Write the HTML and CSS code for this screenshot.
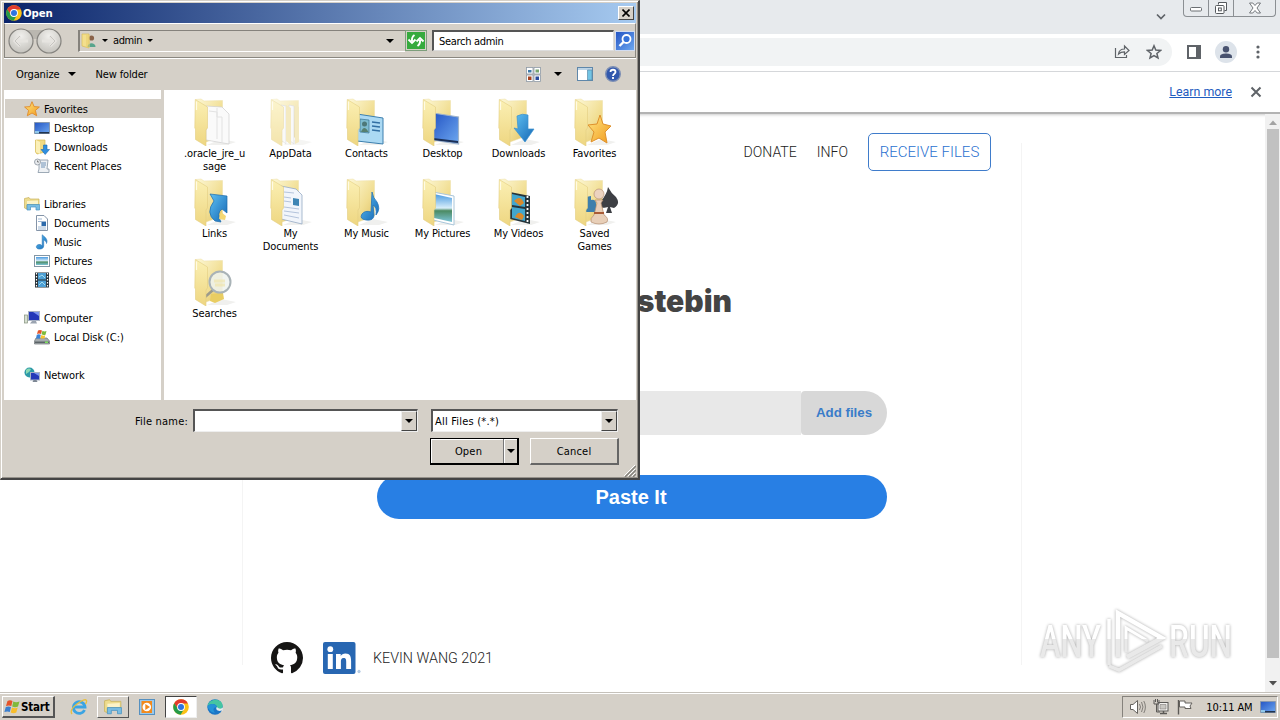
FILE: index.html
```
<!DOCTYPE html>
<html lang="en">
<head>
  <meta charset="UTF-8" />
  <title>Pastebin</title>
  <link rel="stylesheet" href="styles.css">
</head>
<body>

  <!-- Shared icons -->
  <svg class="defs" aria-hidden="true">
    <defs>
      <linearGradient id="gBack" x1="0" y1="0" x2="1" y2="1">
        <stop offset="0" stop-color="#fdf8d6" /><stop offset=".6" stop-color="#f1de93" /><stop offset="1" stop-color="#e0c264" />
      </linearGradient>
      <linearGradient id="gFlap" x1="0" y1="0" x2="0" y2="1">
        <stop offset="0" stop-color="#fbf0b4" /><stop offset="1" stop-color="#eed681" />
      </linearGradient>
      <linearGradient id="gBlue" x1="0" y1="0" x2="1" y2="1">
        <stop offset="0" stop-color="#5fc0f2" /><stop offset="1" stop-color="#1467b5" />
      </linearGradient>
      <linearGradient id="gScreen" x1="0" y1="0" x2="1" y2="1">
        <stop offset="0" stop-color="#2455c4" /><stop offset="1" stop-color="#6ea8f0" />
      </linearGradient>
      <linearGradient id="gStar" x1="0" y1="0" x2="1" y2="1">
        <stop offset="0" stop-color="#ffe784" /><stop offset="1" stop-color="#f19a1c" />
      </linearGradient>
      <linearGradient id="gSky" x1="0" y1="0" x2="0" y2="1">
        <stop offset="0" stop-color="#4a9ae0" /><stop offset=".5" stop-color="#d8eefa" /><stop offset=".6" stop-color="#4b8a62" /><stop offset="1" stop-color="#7cc4d8" />
      </linearGradient>
      <radialGradient id="gRound" cx=".5" cy=".3" r=".8">
        <stop offset="0" stop-color="#f0efec" /><stop offset="1" stop-color="#bfbdb7" />
      </radialGradient>
    </defs>

    <symbol id="folder-back" viewBox="0 0 48 48">
      <path d="M30 41L45 44L36 47H16Z" fill="#f0f0ee" />
      <path d="M5 1.500L10 1L13 3L31.500 2.500V38L15 44Z" fill="url(#gBack)" stroke="#eddfa6" stroke-width=".5" />
    </symbol>
    <symbol id="folder-flap" viewBox="0 0 48 48">
      <path d="M4.300 1.500L16.500 9V30L15 32V48L4.500 41.500V31L3.800 30Z" fill="url(#gFlap)" stroke="#e3cd80" stroke-width=".6" />
      <path d="M5.500 3.500V12" stroke="#fffbe4" stroke-width="1.200" />
    </symbol>

    <symbol id="chrome" viewBox="0 0 16 16">
      <circle cx="8" cy="8" r="7.800" fill="#fbc116" />
      <path d="M1.200 4.200A7.800 7.800 0 0 1 14.900 4.400H8L4.900 9.800Z" fill="#e33b2e" />
      <path d="M1.200 4.200A7.800 7.800 0 0 0 7.600 15.800L11.200 9.800L8 11.500L4.900 9.800Z" fill="#269b49" />
      <circle cx="8" cy="8" r="3.900" fill="#fff" />
      <circle cx="8" cy="8" r="3" fill="#2f74e0" />
    </symbol>
    <symbol id="star" viewBox="0 0 16 16">
      <path d="M8 .7L10.100 5.600L15.400 6L11.400 9.400L12.700 14.800L8 12L3.300 14.800L4.600 9.400L.6 6L5.900 5.600Z" fill="url(#gStar)" stroke="#e08a2a" stroke-width=".9" />
    </symbol>
    <symbol id="monitor" viewBox="0 0 16 16">
      <path d="M.5 2.500H15.500V13.500H.5Z" fill="url(#gScreen)" stroke="#8797ad" />
      <path d="M1 12H15V13.500H1Z" fill="#21344f" />
      <path d="M1 11H5V13.500H1Z" fill="#8fc6ea" />
    </symbol>
    <symbol id="note" viewBox="0 0 16 16">
      <path d="M8.200 11.800V.8C10 2.500 14.500 5 12.500 9.500C12.600 7.500 11 6.500 9.700 6V12C9.700 14.500 7 15.300 4.800 15C1.500 14.600 1.500 11 5 10.500C6.500 10.300 7.500 10.900 8.200 11.800Z" fill="url(#gBlue)" stroke="#2b78bb" stroke-width=".6" />
    </symbol>
    <symbol id="library" viewBox="0 0 16 16">
      <path d="M.5 2.500L5 1.500L6 3H15V9H3V13L.5 12Z" fill="#eddc8e" stroke="#c8b25c" stroke-width=".7" />
      <path d="M3 5L14 4.500V8H3Z" fill="#fbf3c8" />
      <path d="M3 14V8.500H15.500V14H12V11H6.500V14Z" fill="#79bde3" stroke="#4994c2" stroke-width=".7" />
    </symbol>
  </svg>

  <!-- Browser window -->
  <div class="browser">
    <div class="tabstrip">
      <svg class="tab-search" width="12" height="8" viewBox="0 0 12 8"><path d="M2 1.500L6 5.500L10 1.500" fill="none" stroke="#5f6368" stroke-width="1.700" /></svg>
      <div class="caption-buttons">
        <span><svg width="14" height="10" viewBox="0 0 14 10"><rect x="1.500" y="4.500" width="11" height="3.500" rx="1" fill="#fff" stroke="#6b6f73" /></svg></span>
        <span><svg width="14" height="14" viewBox="0 0 14 14"><path d="M4.500 3.500V1.500H12.500V9.500H10.500" fill="#fff" stroke="#55595d" /><rect x="1.500" y="4.500" width="8.500" height="8" rx="1" fill="#fff" stroke="#55595d" /><rect x="4.500" y="7" width="2.800" height="2.800" fill="#fff" stroke="#55595d" /></svg></span>
        <span class="wide"><svg width="14" height="12" viewBox="0 0 14 12"><path d="M1.500 1H4.800L7 3.500L9.200 1H12.500L9 6L12.500 11H9.200L7 8.500L4.800 11H1.500L5 6Z" fill="#fff" stroke="#686c70" stroke-width=".9" /></svg></span>
      </div>
    </div>

    <div class="toolbar">
      <div class="omnibox">
        <svg width="18" height="16" viewBox="0 0 18 16"><path d="M2.500 4V13.500H13.500V11M5.500 10C6 6.500 8.500 5 11.500 5V2L16 6.500L11.500 10.500V7.800C9 7.800 7 8.500 5.500 10Z" fill="none" stroke="#5f6368" stroke-width="1.200" /></svg>
        <svg width="16" height="16" viewBox="0 0 16 16"><path d="M8 1.800L9.800 6.100L14.500 6.500L10.900 9.500L12 14L8 11.600L4 14L5.100 9.500L1.500 6.500L6.200 6.100Z" fill="none" stroke="#5f6368" stroke-width="1.500" /></svg>
      </div>
      <svg class="side-panel" width="14" height="14" viewBox="0 0 14 14"><path d="M1 1H13V13H1Z" fill="#fff" stroke="#5f6368" stroke-width="2" /><path d="M9 0H14V14H9Z" fill="#5f6368" /></svg>
      <svg class="avatar" width="22" height="22" viewBox="0 0 22 22"><circle cx="11" cy="11" r="11" fill="#dde3ea" /><circle cx="11" cy="8.300" r="3.200" fill="#48526f" /><path d="M5 17V15.500C5 13.300 8.500 12.500 11 12.500S17 13.300 17 15.500V17Z" fill="#48526f" /></svg>
      <svg class="kebab" width="4" height="14" viewBox="0 0 4 14" fill="#5f6368"><circle cx="2" cy="2" r="1.600" /><circle cx="2" cy="7" r="1.600" /><circle cx="2" cy="12" r="1.600" /></svg>
    </div>

    <div class="infobar">
      <a>Learn more</a>
      <svg width="12" height="12" viewBox="0 0 12 12"><path d="M1.500 1.500L10.500 10.500M10.500 1.500L1.500 10.500" stroke="#5f6368" stroke-width="2" /></svg>
    </div>

    <div class="viewport">
      <div class="page">
        <div class="container">
          <div class="site-nav">
            <span>DONATE</span>
            <span>INFO</span>
            <span class="receive">RECEIVE FILES</span>
          </div>
          <h1>Pastebin</h1>
          <div class="paste-row">
            <div class="paste-input"></div>
            <div class="add-files">Add files</div>
          </div>
          <div class="paste-btn">Paste It</div>
          <div class="footer">
            <svg width="32" height="32" viewBox="0 0 16 16"><path fill="#161514" d="M8 0C3.580 0 0 3.580 0 8c0 3.540 2.290 6.530 5.470 7.590.4.070.55-.17.55-.38 0-.19-.01-.82-.01-1.490-2.010.37-2.530-.49-2.690-.94-.09-.23-.48-.94-.82-1.130-.28-.15-.68-.52-.01-.53.63-.01 1.080.58 1.230.82.72 1.210 1.870.87 2.330.66.070-.52.28-.87.51-1.070-1.780-.2-3.640-.89-3.640-3.950 0-.87.31-1.590.82-2.150-.08-.2-.36-1.020.08-2.120 0 0 .67-.21 2.200.82.64-.18 1.320-.27 2-.27s1.360.09 2 .27c1.530-1.040 2.200-.82 2.200-.82.44 1.100.16 1.920.08 2.120.51.56.82 1.270.82 2.150 0 3.070-1.870 3.750-3.650 3.950.29.25.54.73.54 1.480 0 1.070-.01 1.930-.01 2.200 0 .21.15.46.55.38A8.010 8.010 0 0 0 16 8c0-4.420-3.580-8-8-8z" /></svg>
            <svg class="linkedin" width="38" height="32" viewBox="0 0 38 32"><rect width="32.500" height="32" rx="2" fill="#2867b2" /><circle cx="7.300" cy="7.200" r="2.900" fill="#fff" /><path d="M4.800 12H9.800V27H4.800ZM13 12H17.700V14C18.500 12.600 20.200 11.600 22.400 11.600C27.200 11.600 28.100 14.800 28.100 18.900V27H23.200V19.700C23.200 18 23.100 15.900 20.600 15.900C18.200 15.900 17.900 17.700 17.900 19.600V27H13Z" fill="#fff" /><circle cx="36" cy="29.500" r="1.300" fill="#b8cde5" stroke="#9db8d8" stroke-width=".5" /></svg>
            <span>KEVIN WANG 2021</span>
          </div>
        </div>
      </div>
      <div class="scrollbar">
        <svg width="8" height="5" viewBox="0 0 8 5"><path d="M0 5L4 .5L8 5Z" fill="#a3a3a3" /></svg>
        <div class="thumb"></div>
        <svg width="8" height="5" viewBox="0 0 8 5"><path d="M0 0L4 4.500L8 0Z" fill="#505050" /></svg>
      </div>
    </div>
  </div>

  <!-- Watermark -->
  <svg class="watermark" width="204" height="74" viewBox="0 0 204 74">
    <defs>
      <linearGradient id="gMark" x1="0" y1="14" x2="0" y2="56" gradientUnits="userSpaceOnUse">
        <stop offset=".5" stop-color="#fff" /><stop offset=".51" stop-color="#e9e9e9" />
      </linearGradient>
    </defs>
    <g fill="url(#gMark)">
      <text x="5" y="53" textLength="61" lengthAdjust="spacingAndGlyphs">ANY</text>
      <text x="134" y="53" textLength="63" lengthAdjust="spacingAndGlyphs">RUN</text>
    </g>
    <g fill="none" stroke="url(#gMark)">
      <path d="M83 53V9L127 34L92 53" stroke-width="4.500" />
      <path d="M74 15V61M74 62L84 66L127 42" stroke-width="3.500" />
      <path d="M91 48V24L113 37" stroke-width="3" />
    </g>
  </svg>

  <!-- Open file dialog -->
  <div class="dialog">
    <div class="titlebar">
      <svg width="16" height="16"><use href="#chrome" /></svg>
      <b>Open</b>
      <span class="close"><svg width="8" height="8" viewBox="0 0 8 8"><path d="M.5 .5L7.500 7.500M7.500 .5L.5 7.500" stroke="#000" stroke-width="1.600" /></svg></span>
    </div>

    <div class="navbar">
      <svg class="back-forward" width="56" height="28" viewBox="0 0 56 28">
        <path d="M14 3H42V10Q28 14 14 10Z" fill="#bab7b0" />
        <g fill="url(#gRound)" stroke="#85837f" stroke-width="1.200"><circle cx="14" cy="14" r="12" /><circle cx="42" cy="14" r="12" /></g>
        <path d="M21 14H8M13 9L8 14L13 19M35 14H48M43 9L48 14L43 19" fill="none" stroke="#e6e4e0" stroke-width="3" />
        <path d="M13 9L8 14L13 19M43 9L48 14L43 19" fill="none" stroke="#b8b6b1" stroke-width=".7" />
      </svg>
      <div class="address">
        <svg width="16" height="16" viewBox="0 0 16 16"><path d="M1 1H8V15L1 13Z" fill="#f3df8c" stroke="#d9bd5a" stroke-width=".7" /><circle cx="10.500" cy="5" r="2.600" fill="#8a6248" /><path d="M6.500 14C6.500 9 14.500 9 14.500 14Z" fill="#58a58d" /><path d="M5 2H9V14L5 15Z" fill="#ead071" opacity=".6" /></svg>
        <i class="arrow small"></i>
        <span>admin</span>
        <i class="arrow small"></i>
        <i class="arrow last"></i>
      </div>
      <span class="refresh"><svg width="18" height="17" viewBox="0 0 18 17"><rect width="18" height="17" fill="#35aa3d" /><path d="M6 13V6M2.500 9L6 5.500" fill="none" stroke="none" /><path d="M7.500 3Q4.500 5 5 9M1.500 7.500L5 11L8.500 7.500M10.500 14Q13.500 12 13 8M9.500 9.500L13 6L16.500 9.500" fill="none" stroke="#fff" stroke-width="1.900" /></svg></span>
      <div class="search">Search admin</div>
      <span class="search-btn"><svg width="18" height="18" viewBox="0 0 18 18"><rect width="18" height="18" fill="url(#gScreen)" /><circle cx="10.500" cy="7" r="4" fill="#3672d8" stroke="#fff" stroke-width="1.800" /><path d="M7.500 10L3.500 14" stroke="#fff" stroke-width="2.400" /></svg></span>
    </div>

    <div class="commands">
      <span>Organize</span>
      <i class="arrow"></i>
      <span class="new-folder">New folder</span>
      <svg class="views" width="15" height="15" viewBox="0 0 15 15"><g fill="#fff" stroke="#8e9aa6" stroke-width=".8"><rect x=".5" y=".5" width="6.500" height="6.500" /><rect x="8" y=".5" width="6.500" height="6.500" /><rect x=".5" y="8" width="6.500" height="6.500" /><rect x="8" y="8" width="6.500" height="6.500" /></g><path d="M2 3H5.500V5.500H2Z" fill="#3c79a8" /><path d="M9.500 2.500H13V5.500H9.500Z" fill="#77a56e" /><path d="M2 9.500H5.500V13H2Z" fill="#a6421f" /><path d="M9.500 9.500H13V13H9.500Z" fill="#284a9c" /></svg>
      <i class="arrow"></i>
      <svg class="preview" width="16" height="14" viewBox="0 0 16 14"><rect x=".5" y=".5" width="15" height="13" fill="#fff" stroke="#5f87aa" /><path d="M1 1H15V3H1Z" fill="#bdd4e6" /><path d="M10.500 3V13H15V3Z" fill="#72c4e4" stroke="#5b8cab" stroke-width=".7" /></svg>
      <svg class="help" width="16" height="16" viewBox="0 0 16 16"><circle cx="8" cy="8" r="7.300" fill="#3258ad" stroke="#7d8fb4" stroke-width="1.400" /><path d="M5.500 6C5.500 3 10.500 3 10.500 6C10.500 7.800 8 7.700 8 10M8 11V13" fill="none" stroke="#fff" stroke-width="1.800" /></svg>
    </div>

    <div class="panes">
      <div class="tree">
        <div class="node root selected"><svg width="16" height="16"><use href="#star" /></svg><span>Favorites</span></div>
        <div class="node"><svg width="16" height="16"><use href="#monitor" /></svg><span>Desktop</span></div>
        <div class="node"><svg width="16" height="16" viewBox="0 0 16 16"><path d="M1.500 1H11V13L3 15L1.500 13Z" fill="#f1db83" stroke="#d6ba56" stroke-width=".7" /><path d="M2 1L6 3V15L2 13Z" fill="#fbf0b8" /><path d="M9.500 6H13V10.500H15.500L11.200 15.500L7 10.500H9.500Z" fill="#2f8fe0" stroke="#1a68b0" stroke-width=".6" /></svg><span>Downloads</span></div>
        <div class="node"><svg width="16" height="16" viewBox="0 0 16 16"><path d="M5 2H14L13 11H15V14.500H4L5 11Z" fill="#eef1f4" stroke="#8795a4" stroke-width=".8" /><path d="M7 5H12M7 7H12M7 9H11" stroke="#7193b8" /><circle cx="3.500" cy="4" r="3" fill="#e8ebee" stroke="#8a949e" stroke-width=".8" /><path d="M3.500 2.500V4H5" stroke="#555" stroke-width=".7" fill="none" /></svg><span>Recent Places</span></div>
        <div class="node root gap"><svg width="16" height="16"><use href="#library" /></svg><span>Libraries</span></div>
        <div class="node"><svg width="16" height="16" viewBox="0 0 16 16"><path d="M2.500 .5H10L13.500 4V15.500H2.500Z" fill="#fff" stroke="#8494a8" /><path d="M4 4H8M4 6.500H12M4 12H12M4 14H12" stroke="#9fb8d4" /><path d="M7.500 7H12V11H7.500Z" fill="#2d6aab" /></svg><span>Documents</span></div>
        <div class="node"><svg width="16" height="16"><use href="#note" /></svg><span>Music</span></div>
        <div class="node"><svg width="16" height="16" viewBox="0 0 16 16"><rect x=".5" y="2.500" width="15" height="11" fill="#fff" stroke="#8296a6" /><rect x="2" y="4" width="12" height="8" fill="url(#gSky)" /></svg><span>Pictures</span></div>
        <div class="node"><svg width="16" height="16" viewBox="0 0 16 16"><rect x="1" y=".5" width="14" height="15" fill="#283238" /><path d="M4 1H12V7.500H4ZM4 8.500H12V15H4Z" fill="#4d9fd4" /><path d="M5 5L8 3L11 6M5 13L8 10L11 13" stroke="#a5dced" fill="none" /><path d="M2.500 1V16M13.500 1V16" stroke="#fff" stroke-width="1.200" stroke-dasharray="1.500 1.500" /></svg><span>Videos</span></div>
        <div class="node root gap"><svg width="16" height="16" viewBox="0 0 16 16"><rect x="4.500" y="1.500" width="11" height="9" fill="#2438b8" stroke="#a8b2c4" /><path d="M9 2H15V6Z" fill="#7b94ee" /><path d="M8 11H12L13 13.500H6Z" fill="#9aa3b0" /><rect x=".5" y="5" width="3" height="8" fill="#d6dfd0" stroke="#84917c" stroke-width=".7" /></svg><span>Computer</span></div>
        <div class="node"><svg width="16" height="16" viewBox="0 0 16 16"><path d="M2 9H13L15.500 12V15H.5V12Z" fill="#a5abae" stroke="#6d7376" stroke-width=".7" /><path d="M1 12.500H15V14H1Z" fill="#5c6468" /><path d="M11 12.500H14V14H11Z" fill="#7ce35b" /><path d="M4 1.500Q6 .3 8 1.500L7 5Q5 4 3 5Z" fill="#e4572a" /><path d="M8.500 1.800Q10.500 3 12.500 2L11.500 5.700Q9.500 6.500 7.500 5.300Z" fill="#7dbb3a" /><path d="M2.800 5.700Q5 4.700 6.800 5.800L6 9.500H2Z" fill="#3a83d6" /><path d="M7.300 6Q9.500 7.200 11.200 6.300L10.500 9.500H6.500Z" fill="#f7c52e" /></svg><span>Local Disk (C:)</span></div>
        <div class="node root gap"><svg width="16" height="16" viewBox="0 0 16 16"><circle cx="5.500" cy="5.500" r="5" fill="#2d9aa8" /><path d="M2 3Q5 .5 7 2.500Q5 6 2 7Z" fill="#8ad9b4" /><rect x="6.500" y="5.500" width="9" height="7.500" fill="#2438b8" stroke="#a8b2c4" /><path d="M10 6H15V9Z" fill="#7b94ee" /><path d="M9.500 13H12.500L13.500 15H8.500Z" fill="#7d8794" /></svg><span>Network</span></div>
      </div>

      <div class="files">
        <div class="file">
          <svg width="48" height="48" viewBox="0 0 48 48"><use href="#folder-back" /><path d="M15 8L31 9L38 16V46L15 42Z" fill="#fafafa" stroke="#cfcfcf" stroke-width=".7" /><path d="M18 13L26 14V41M26 10V19H31V44" fill="none" stroke="#e2e2e2" /><use href="#folder-flap" /></svg>
          .oracle_jre_u<br>sage
        </div>
        <div class="file">
          <svg class="faded" width="48" height="48" viewBox="0 0 48 48"><use href="#folder-back" /><path d="M14 7L19 8V46L14 42ZM22 7L27 8V46L22 42Z" fill="#f6f6f6" stroke="#c9c9c9" stroke-width=".6" /><path d="M19 7L24 10V47L19 43ZM28 6L32 9V44L28 46Z" fill="#efdfa0" /><use href="#folder-flap" /></svg>
          AppData
        </div>
        <div class="file">
          <svg width="48" height="48" viewBox="0 0 48 48"><use href="#folder-back" /><path d="M14 16L40 20V46L14 43Z" fill="#abd9f3" stroke="#3c7fae" /><path d="M17 21L26 22V35L17 34Z" fill="#7ebccf" stroke="#3a7290" stroke-width=".7" /><circle cx="21.500" cy="26" r="2.500" fill="#4d7878" /><path d="M18 34Q21 26 25.500 34Z" fill="#567f70" /><path d="M29 24L37 25M29 28L37 29M29 32L37 33" stroke="#326fa3" stroke-width="1.300" /><use href="#folder-flap" /></svg>
          Contacts
        </div>
        <div class="file">
          <svg width="48" height="48" viewBox="0 0 48 48"><use href="#folder-back" /><path d="M14 15L39.500 19V46L14 42Z" fill="url(#gScreen)" stroke="#9fb3cb" stroke-width="1.200" /><path d="M14 40L39 43V45L14 42Z" fill="#1b2f55" /><use href="#folder-flap" /></svg>
          Desktop
        </div>
        <div class="file">
          <svg width="48" height="48" viewBox="0 0 48 48"><use href="#folder-back" /><path d="M22 18Q27 15 33 17V31H39L30 44L19 30L23 31Z" fill="url(#gBlue)" stroke="#3a91cf" stroke-width=".7" /><use href="#folder-flap" /></svg>
          Downloads
        </div>
        <div class="file">
          <svg width="48" height="48" viewBox="0 0 48 48"><use href="#folder-back" /><path d="M29 17L32 26L40 28L34 34L36 45L28 40L20 44L23 34L17 27L26 26Z" fill="url(#gStar)" stroke="#df912c" /><use href="#folder-flap" /></svg>
          Favorites
        </div>
        <div class="file">
          <svg width="48" height="48" viewBox="0 0 48 48"><use href="#folder-back" /><path d="M19 16L36 18V35L31 31Q25 35 30 44L24 43Q14 35 23 23Z" fill="url(#gBlue)" stroke="#1c6cab" stroke-width=".7" /><path d="M30 34L35 38L34 42L28 41Z" fill="#f5d873" /><use href="#folder-flap" /></svg>
          Links
        </div>
        <div class="file">
          <svg width="48" height="48" viewBox="0 0 48 48"><use href="#folder-back" /><path d="M14 8L29 11L35 17V46L14 41Z" fill="#f1f5fb" stroke="#95a9c4" stroke-width=".8" /><path d="M17 14L27 15M17 19L24 20M17 23L24 24M17 29L32 31M17 33L32 35M17 37L32 40" stroke="#b4c4dc" /><path d="M26 20L32 21V28L26 27Z" fill="#3e85b4" /><use href="#folder-flap" /></svg>
          My<br>Documents
        </div>
        <div class="file">
          <svg width="48" height="48" viewBox="0 0 48 48"><use href="#folder-back" /><path d="M29 14Q30 20 34 24Q38 31 33 37Q34 29 30 27L31 37Q31 43 23 42Q16 41 19 36Q22 32 28 34Z" fill="url(#gBlue)" stroke="#2574b6" stroke-width=".8" /><use href="#folder-flap" /></svg>
          My Music
        </div>
        <div class="file">
          <svg width="48" height="48" viewBox="0 0 48 48"><use href="#folder-back" /><path d="M14 14L35 18V47L14 42Z" fill="#fff" stroke="#a9c6da" /><path d="M15 16L33 20V44L15 40Z" fill="url(#gSky)" /><use href="#folder-flap" /></svg>
          My Pictures
        </div>
        <div class="file">
          <svg width="48" height="48" viewBox="0 0 48 48"><use href="#folder-back" /><path d="M15 14L35 18V46L15 41Z" fill="#27343a" /><path d="M17 16L30 19V29L17 27ZM17 29L30 31V43L17 40Z" fill="#42a6ce" /><path d="M19 23Q25 16 29 25L25 28ZM20 39Q24 31 29 38L27 42Z" fill="#d98a2d" /><path d="M32.500 18V46" stroke="#fff" stroke-width="1.800" stroke-dasharray="2 2" /><use href="#folder-flap" /></svg>
          My Videos
        </div>
        <div class="file">
          <svg width="48" height="48" viewBox="0 0 48 48"><use href="#folder-back" /><path d="M15 19L20 18V22Q25 21 25 26V34H15Z" fill="#3d7fac" /><path d="M37 9Q40 15 45 19Q50 26 43 30L39 29L41 35H35L37 29Q28 32 30 23Q36 16 37 9Z" fill="#3d3f44" /><path d="M24 22H32L30 25L33 37Q38 40 36 44Q28 48 20 44Q19 40 23 37L26 25Z" fill="#e8cfb8" stroke="#b48e71" stroke-width=".7" /><circle cx="28" cy="16" r="5" fill="#ecd3c0" stroke="#b99175" stroke-width=".7" /><path d="M23 35H33" stroke="#a95c37" stroke-width="2" /><use href="#folder-flap" /></svg>
          Saved<br>Games
        </div>
        <div class="file">
          <svg width="48" height="48" viewBox="0 0 48 48"><use href="#folder-back" /><path d="M20 36L32 35L33 41L24 45L19 43Z" fill="#e9cd62" /><path d="M22 32L14 39" stroke="#9b9a8c" stroke-width="2.500" /><circle cx="29" cy="24" r="10.500" fill="#eef3ef" fill-opacity=".85" stroke="#a9b3b7" stroke-width="2" /><path d="M23 23H34M24 27H34" stroke="#f0e4a4" stroke-width="3" opacity=".6" /><use href="#folder-flap" /></svg>
          Searches
        </div>
      </div>
    </div>

    <div class="form">
      <div class="form-row">
        <label>File name:</label>
        <div class="combo name"><span></span><b><i class="arrow"></i></b></div>
        <div class="combo filter"><span>All Files (*.*)</span><b><i class="arrow"></i></b></div>
      </div>
      <div class="form-row buttons">
        <div class="btn default"><span>Open</span><b><i class="arrow"></i></b></div>
        <div class="btn cancel">Cancel</div>
      </div>
      <svg class="grip" width="12" height="12" viewBox="0 0 12 12"><path d="M1 12L12 1M5 12L12 5M9 12L12 9" stroke="#85827c" stroke-width="1.500" /><path d="M0 11L11 0M4 11L11 4M8 11L11 8" stroke="#fff" /></svg>
    </div>
  </div>

  <!-- Taskbar -->
  <div class="taskbar">
    <div class="start">
      <svg width="17" height="16" viewBox="0 0 17 16"><path d="M3.500 2Q6 .5 8.500 2L7.300 7Q5 5.800 2 7Z" fill="#e5532a" /><path d="M9.300 2.500Q12 4 15.500 2.500L14 7.500Q11 9 8.200 7.500Z" fill="#80b93b" /><path d="M1.800 8Q4.500 6.800 7 8L5.800 13Q3.500 11.800 .4 13Z" fill="#3b7fcf" /><path d="M8 8.400Q11 9.900 13.700 8.500L12.300 13.500Q9.500 15 6.700 13.500Z" fill="#f8bd2b" /></svg>
      <b>Start</b>
    </div>
    <div class="task ie"><svg width="18" height="18" viewBox="0 0 18 18"><path d="M14.500 12A5.800 5.800 0 1 1 15 9H5" fill="none" stroke="#3ba4e3" stroke-width="2.800" /><path d="M2 16Q-1 12 7 6Q15 0 16.500 2.500Q17 4 15.500 6" fill="none" stroke="#e8bf3d" stroke-width="1.300" /></svg></div>
    <div class="task raised"><svg width="18" height="18"><use href="#library" /></svg></div>
    <div class="task"><svg width="16" height="16" viewBox="0 0 16 16"><rect x=".5" y=".5" width="15" height="15" fill="#9ac9ec" stroke="#5590c0" /><path d="M2.500 2H13V14H2.500Z" fill="#f28a1c" /><circle cx="7.800" cy="8" r="4.300" fill="#fff" /><path d="M6.300 5L11 8L6.300 11Z" fill="#f28a1c" /></svg></div>
    <div class="task pressed"><svg width="16" height="16"><use href="#chrome" /></svg></div>
    <div class="task"><svg width="16" height="16" viewBox="0 0 16 16"><circle cx="8" cy="8" r="7.700" fill="#1b75c6" /><path d="M.5 7C2 -1.500 15.500 -1.500 15.700 7C15.700 11 10 11 9.700 9.500C11 7 8 4.500 5 5Q2 5.500 .5 7Z" fill="#45c5a2" /><path d="M.4 8C2 4 9 4 9.800 8.500C7 7 5 11 8 13.500Q4 14.500 .4 8Z" fill="#2493d8" /><path d="M9.800 8C8 10.500 11 13 15 11.500L15.500 12.500L16 8.500Q13 11 9.800 8Z" fill="#e6ecee" /></svg></div>
    <div class="tray">
      <svg width="17" height="16" viewBox="0 0 17 16"><path d="M1.500 5.500H4L8.500 1.500V14.500L4 10.500H1.500Z" fill="#fff" stroke="#65625e" /><path d="M10.500 5Q12.500 8 10.500 11M12.500 3Q15.500 8 12.500 13M14.800 2Q18 8 14.800 14" fill="none" stroke="#77746f" stroke-width=".9" /></svg>
      <svg width="16" height="16" viewBox="0 0 16 16"><rect x="5" y="3.500" width="10" height="8.500" fill="#f4f3f0" stroke="#5b5956" /><path d="M7 5.500H13V10H7Z" fill="#c9c7c2" stroke="#7f7c78" stroke-width=".6" /><path d="M7 14.500H14M10.500 12V14" stroke="#5b5956" stroke-width="1.500" /><path d="M1 1V5H6V1M2.500 0V3M4.500 0V3M3.500 5V13H7" fill="none" stroke="#5b5956" /></svg>
      <svg width="16" height="16" viewBox="0 0 16 16"><path d="M1.500 1V15.500" stroke="#5b5956" stroke-width="1.400" /><path d="M2.500 2H8V4H15L13 7L14 9.500H8V8H2.500Z" fill="#fff" stroke="#65625e" /></svg>
      <span>10:11 AM</span>
      <svg width="16" height="16"><use href="#monitor" /></svg>
    </div>
  </div>

</body>
</html>
```
FILE: styles.css
```
* {
  margin: 0;
  padding: 0;
  box-sizing: border-box;
}

html, body {
  height: 100%;
  overflow: hidden;
}

body {
  position: relative;
  display: flex;
  flex-direction: column;
  font-family: "DejaVu Sans Condensed", "DejaVu Sans", sans-serif;
  font-size: 11px;
  letter-spacing: -0.1px;
  color: #000;
  background: #fff;
}

svg {
  display: block;
  flex: none;
}

.defs {
  position: absolute;
  width: 0;
  height: 0;
}

/* Browser */
.browser {
  height: 692px;
  display: flex;
  flex-direction: column;
  letter-spacing: 0;
}

.tabstrip {
  height: 34px;
  background: #e7eaed;
  display: flex;
  justify-content: flex-end;
  align-items: flex-start;
  padding-right: 4px;
}

.tab-search {
  margin: 13px 16px 0 0;
}

.caption-buttons {
  display: flex;
  height: 17px;
  border: 1px solid #8b8f93;
  border-top: none;
  border-radius: 0 0 4px 4px;
}

.caption-buttons span {
  width: 25px;
  display: flex;
  justify-content: center;
  align-items: center;
  border-right: 1px solid #8b8f93;
}

.caption-buttons .wide {
  width: 41px;
  border-right: none;
}

.toolbar {
  height: 38px;
  display: flex;
  align-items: center;
  padding-bottom: 1px;
  border-bottom: 1px solid #d5d7da;
  background: #fff;
}

.omnibox {
  width: 1172px;
  height: 28px;
  background: #f1f3f4;
  border-radius: 14px;
  display: flex;
  justify-content: flex-end;
  align-items: center;
  gap: 15px;
  padding-right: 10px;
}

.side-panel {
  margin-left: 15px;
}

.avatar {
  margin-left: 14px;
}

.kebab {
  margin-left: 19px;
}

.infobar {
  height: 42px;
  display: flex;
  justify-content: flex-end;
  align-items: center;
  gap: 18px;
  padding: 0 18px 2px 0;
  border-bottom: 2px solid #b3b3b3;
  font: 12.400px Roboto, sans-serif;
}

.infobar a {
  color: #1f5cc0;
  text-decoration: underline;
}

.infobar svg {
  margin-top: 2px;
}

.viewport {
  flex: 1;
  display: flex;
  box-shadow: inset 0 4px 3px -3px #ccc;
}

.page {
  flex: 1;
}

.container {
  width: 780px;
  height: 522px;
  margin: 29px 0 0 242px;
  border: solid #f4f4f4;
  border-width: 0 1px;
  display: flex;
  flex-direction: column;
  font-family: Roboto, sans-serif;
}

.container > * {
  flex: none;
}

.site-nav {
  margin: -10px 30px 0 0;
  height: 38px;
  display: flex;
  justify-content: flex-end;
  align-items: center;
  gap: 20px;
  font-size: 14.100px;
  font-weight: 300;
  color: #222;
}

.receive {
  width: 123px;
  height: 38px;
  line-height: 36px;
  text-align: center;
  border: 1px solid #3f7ccb;
  border-radius: 5px;
  font-size: 15px;
  color: #2a71d0;
}

.container h1 {
  margin: 110px 289px 0 0;
  line-height: 40px;
  text-align: right;
  font-family: Inter, sans-serif;
  font-size: 30px;
  font-weight: 900;
  color: #444;
}

.paste-row {
  width: 510px;
  height: 44px;
  margin: 70px 0 0 134px;
  display: flex;
  border-radius: 22px;
  overflow: hidden;
}

.paste-input {
  flex: 1;
  background: #e8e8e8;
}

.add-files {
  width: 86px;
  border-radius: 4px 0 0 4px;
  background: #d8d8d8;
  color: #3a7cc9;
  font: bold 13.300px/44px "Liberation Sans", sans-serif;
  text-align: center;
}

.paste-btn {
  width: 510px;
  height: 44px;
  margin: 40px 0 0 134px;
  padding-right: 2px;
  border-radius: 22px;
  background: #287fe4;
  color: #fff;
  font: bold 20px/44px "Liberation Sans", sans-serif;
  text-align: center;
}

.footer {
  margin: 123px 0 0 28px;
  height: 32px;
  display: flex;
  align-items: center;
  font-size: 14.300px;
  font-weight: 300;
  color: #222;
}

.linkedin {
  margin: 0 12px 0 20px;
}

.scrollbar {
  width: 15px;
  background: #f1f1f1;
  display: flex;
  flex-direction: column;
  align-items: center;
  padding: 6px 0;
}

.thumb {
  width: 12px;
  height: 529px;
  margin: 4px 0 auto;
  background: #c1c1c1;
}

.watermark {
  position: absolute;
  left: 1035px;
  top: 604px;
  overflow: visible;
  font: 500 44px Roboto, sans-serif;
  letter-spacing: 0;
  filter: drop-shadow(0 0 1.500px rgba(0, 0, 0, 0.35));
}

/* Small black triangle used by every drop-down */
.arrow {
  flex: none;
  width: 0;
  height: 0;
  border: solid transparent;
  border-width: 4px 4px 0;
  border-top-color: #000;
}

.arrow.small {
  border-width: 3px 3px 0;
  border-top-color: #000;
}

/* Open dialog */
.dialog {
  position: absolute;
  left: 0;
  top: 0;
  width: 640px;
  height: 480px;
  padding: 2px 2px 0 3px;
  display: flex;
  flex-direction: column;
  background: #d5d0c8;
  border: 1px solid #d5d0c8;
  border-right: 2px solid #444;
  border-bottom: 2px solid #444;
  box-shadow: inset 1px 1px #fff, inset -1px -1px #96928b;
}

.titlebar {
  height: 20px;
  display: flex;
  align-items: center;
  padding: 0 2px;
  background: linear-gradient(90deg, #0a246a, #a6caf0);
  color: #fff;
}

.titlebar b {
  margin-left: 1px;
  font-size: 11.300px;
}

.close {
  margin-left: auto;
  width: 16px;
  height: 14px;
  display: flex;
  align-items: center;
  justify-content: center;
  background: #d5d0c8;
  border: 1px solid #fff;
  border-right-color: #444;
  border-bottom-color: #444;
}

.navbar {
  height: 35px;
  display: flex;
  align-items: center;
  border: 1px solid #8a8780;
  border-top-color: #fff;
  box-shadow: 0 1px #fff;
}

.back-forward {
  margin-left: 2px;
}

.address {
  width: 327px;
  height: 22px;
  margin-left: 15px;
  padding: 0 11px 0 1px;
  display: flex;
  align-items: center;
  border: 1px solid #fff;
  border-top-color: #85827c;
  border-left: 2px solid #85827c;
  border-right: none;
}

.address span {
  margin: 0 5px 1px 5px;
  letter-spacing: -0.400px;
}

.address .arrow {
  margin-left: 5px;
}

.address span + .arrow {
  margin-left: 0;
}

.address .last {
  margin-left: auto;
}

.refresh {
  padding: 1px;
  border: 1px solid #7d9e7b;
}

.search {
  width: 182px;
  height: 21px;
  margin-left: 5px;
  padding-left: 5px;
  line-height: 19px;
  letter-spacing: -0.300px;
  background: #fff;
  border: 2px solid #555;
  border-width: 2px 1px 1px 2px;
  border-right-color: #ddd;
  border-bottom-color: #ddd;
}

.search-btn {
  margin-left: 1px;
  border: 1px solid #d2dcf0;
}

.commands {
  height: 32px;
  padding: 0 15px 0 12px;
  display: flex;
  align-items: center;
}

.commands .arrow {
  margin-left: 8px;
}

.new-folder {
  margin-left: 20px;
  letter-spacing: -0.150px;
}

.views {
  margin-left: auto;
}

.commands .views + .arrow {
  margin-left: 13px;
}

.preview {
  margin-left: 15px;
}

.help {
  margin-left: 12px;
}

.panes {
  height: 310px;
  display: flex;
  gap: 3px;
}

.tree {
  width: 157px;
  padding: 9px 0 0 1px;
  background: #fff;
}

.node {
  height: 19px;
  display: flex;
  align-items: center;
  gap: 4px;
  padding-left: 29px;
}

.node span {
  padding-top: 2px;
}

.node.root {
  padding-left: 19px;
}

.node.gap {
  margin-top: 19px;
}

.node.selected {
  background: #d5d0c8;
}

.files {
  width: 472px;
  padding: 8px 0 0 12px;
  display: grid;
  grid-template-columns: repeat(6, 76px);
  grid-auto-rows: 80px;
  align-content: start;
  background: #fff;
}

.file {
  text-align: center;
  line-height: 13px;
  padding-left: 1px;
}

.file svg {
  margin: 0 auto 1px;
}

.faded {
  opacity: 0.65;
}

.form {
  flex: 1;
  position: relative;
  padding: 9px 18px 0 0;
}

.form-row {
  display: flex;
  justify-content: flex-end;
  align-items: center;
}

.form-row label {
  margin: 1px 5px 0 0;
  letter-spacing: 0.200px;
}

.combo {
  height: 23px;
  display: flex;
  justify-content: space-between;
  background: #fff;
  border: 2px solid #555;
  border-right: 1px solid #eee;
  border-bottom: 1px solid #eee;
}

.combo span {
  padding-left: 2px;
  line-height: 21px;
  letter-spacing: 0.200px;
}

.combo b {
  width: 16px;
  display: flex;
  align-items: center;
  justify-content: center;
  background: #d5d0c8;
  border: 1px solid #eee;
  border-right-color: #444;
  border-bottom-color: #444;
}

.name {
  width: 225px;
}

.filter {
  width: 187px;
  margin-left: 13px;
}

.buttons {
  margin: 6px -1px 0 0;
  gap: 11px;
}

.btn {
  width: 89px;
  height: 27px;
  line-height: 25px;
  letter-spacing: 0.200px;
  text-align: center;
  border: 1px solid #fff;
  border-right: 2px solid #666;
  border-bottom: 2px solid #666;
}

.btn.default {
  display: flex;
  border: 1px solid #000;
  border-right-width: 2px;
  border-bottom-width: 2px;
  box-shadow: inset 1px 1px #fff;
}

.default span {
  flex: 1;
  padding-left: 3px;
}

.default b {
  width: 14px;
  display: flex;
  align-items: center;
  justify-content: center;
  border-left: 1px solid #777;
  box-shadow: inset 1px 1px #fff;
}

.grip {
  position: absolute;
  right: 0;
  bottom: 1px;
}

/* Taskbar */
.taskbar {
  height: 28px;
  display: flex;
  align-items: center;
  padding: 1px 2px 0;
  background: #d5d0c8;
  border-top: 1px solid #c5c1ba;
  box-shadow: inset 0 1px #fff;
}

.start {
  width: 53px;
  height: 22px;
  display: flex;
  align-items: center;
  padding-left: 1px;
  border: 1px solid #fff;
  border-right: 2px solid #555;
  border-bottom: 2px solid #555;
}

.start b {
  font-size: 11.500px;
  letter-spacing: -0.200px;
}

.start + .task {
  margin-left: 8px;
}

.task {
  width: 32px;
  height: 22px;
  margin-right: 2px;
  display: flex;
  align-items: center;
  justify-content: center;
}

.raised {
  border: 1px solid #fff;
  border-right-color: #555;
  border-bottom-color: #555;
}

.pressed {
  background: #fff;
  border: 1px solid #444;
  border-right-color: #eee;
  border-bottom-color: #eee;
}

.tray {
  width: 156px;
  height: 22px;
  margin-left: auto;
  padding: 0 1px 0 6px;
  display: flex;
  align-items: center;
  justify-content: space-between;
  border: 1px solid #85827c;
  border-right-color: #fff;
  border-bottom-color: #fff;
}

.tray span {
  margin-left: 6px;
}
```
